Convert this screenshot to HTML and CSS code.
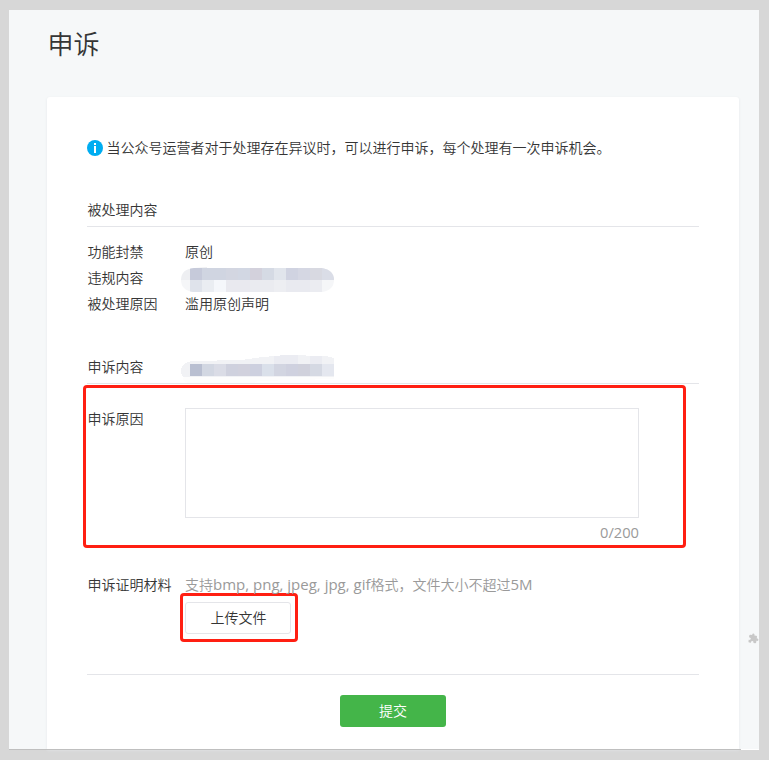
FILE: index.html
```html
<!DOCTYPE html>
<html lang="zh-CN">
<head>
<meta charset="utf-8">
<title>申诉</title>
<link rel="stylesheet" href="styles.css">
</head>
<body>
<main class="page">
  <h1 class="title">申诉</h1>
  <section class="card">
    <p class="notice">
      <svg class="info" viewBox="0 0 16 16" width="16" height="16"><circle cx="8" cy="8" r="8" fill="#00adf1"/><path d="M7 3h2v2H7zM7 6h2v7H7z" fill="#fff"/></svg>
      <span>当公众号运营者对于处理存在异议时，可以进行申诉，每个处理有一次申诉机会。</span>
    </p>

    <h2 class="heading">被处理内容</h2>
    <dl class="details">
      <dt>功能封禁</dt><dd>原创</dd>
      <dt>违规内容</dt>
      <dd>
        <svg class="mosaic" viewBox="0 0 153 26" width="153" height="26" shape-rendering="crispEdges">
          <clipPath id="pill"><path d="M13 1 L26 0 V1 H141 Q153 3 153 13 Q153 23 141 25 H12 Q0 23 0 13 Q0 2 13 1Z"/></clipPath>
          <g clip-path="url(#pill)">
            <path fill="#eeeff2" d="M0 0h153v13H0z"/><path fill="#f5f6f8" d="M0 13h153v13H0z"/>
            <path fill="#c6cada" d="M9 1h12v12H9z"/><path fill="#d0d5e1" d="M21 1h24v12H21z"/><path fill="#d3d6e1" d="M45 1h12v12H45z"/><path fill="#d2d7e3" d="M57 1h12v12H57z"/><path fill="#d3d1dc" d="M69 1h12v12H69z"/><path fill="#d5dae4" d="M81 1h12v12H81z"/><path fill="#e1e5ec" d="M93 1h12v12H93z"/><path fill="#d0d3e1" d="M105 1h12v12h-12z"/><path fill="#d5d7e3" d="M117 1h12v12h-12z"/><path fill="#d8d9e1" d="M129 1h12v12h-12z"/><path fill="#dadde7" d="M141 1h12v12h-12z"/>
            <path fill="#dfe3eb" d="M9 13h12v12H9z"/><path fill="#eaedf2" d="M21 13h12v12H21z"/><path fill="#f5f7fb" d="M33 13h12v12H33z"/><path fill="#e9e9ef" d="M45 13h24v12H45z"/><path fill="#eaebf0" d="M69 13h24v12H69z"/><path fill="#edeef2" d="M93 13h12v12H93z"/><path fill="#e9eaf0" d="M105 13h24v12h-24z"/><path fill="#ebecf1" d="M129 13h12v12h-12z"/>
          </g>
        </svg>
      </dd>
      <dt>被处理原因</dt><dd>滥用原创声明</dd>
    </dl>

    <h2 class="heading heading-appeal">
      <span class="label">申诉内容</span>
      <svg class="mosaic" viewBox="0 0 153 28" width="153" height="28" shape-rendering="crispEdges">
        <path fill="#fdfdfd" d="M0 16h153v8L78 26 72 28H8Q0 26 3 22Z"/>
        <path fill="#f1f2f5" d="M0 15Q1 7 12 6L60 5 82 2 105 0 145 1 153 3V22H3Q0 21 0 15Z"/>
        <path fill="#ebecf2" d="M93 1 105 0h12v9H93zM129 1h12v8h-12z"/>
        <path fill="#b9bfd1" d="M9 9h12v12H9z"/><path fill="#d2d7e2" d="M21 9h12v12H21z"/><path fill="#dadce6" d="M33 9h12v12H33z"/><path fill="#cfd1de" d="M45 9h12v12H45z"/><path fill="#d1d1dd" d="M57 9h12v12H57z"/><path fill="#cdd0df" d="M69 9h12v12H69z"/><path fill="#dae0ea" d="M81 9h12v12H81z"/><path fill="#d2d5e1" d="M93 9h12v12H93z"/><path fill="#cfd1df" d="M105 9h12v12h-12z"/><path fill="#d0d1dc" d="M117 9h12v12h-12z"/><path fill="#d5d9e3" d="M129 9h12v12h-12z"/><path fill="#e4e7ef" d="M141 9h12v12h-12z"/>
      </svg>
    </h2>

    <div class="reason">
      <label class="label" for="reason">申诉原因</label>
      <div class="editor">
        <textarea class="input" id="reason"></textarea>
        <span class="count">0/200</span>
      </div>
    </div>

    <div class="proof">
      <span class="label">申诉证明材料</span>
      <div class="upload">
        <p class="hint">支持<span class="latin">bmp, png, jpeg, jpg, gif</span>格式，文件大小不超过<span class="latin">5M</span></p>
        <div class="highlight"><button class="file">上传文件</button></div>
      </div>
    </div>

    <footer class="actions"><button class="submit">提交</button></footer>
  </section>
  <svg class="puzzle" viewBox="0 0 24 24" width="11" height="11"><path fill="#c8c8c8" d="M20.500 11H19V7a2 2 0 0 0-2-2h-4V3.500a2.500 2.500 0 0 0-5 0V5H4a2 2 0 0 0-2 2v3.800h1.500a2.700 2.700 0 0 1 0 5.400H2V20a2 2 0 0 0 2 2h3.800v-1.500a2.700 2.700 0 0 1 5.400 0V22H17a2 2 0 0 0 2-2v-4h1.500a2.500 2.500 0 0 0 0-5z" transform="rotate(8 12 12)"/></svg>
</main>
</body>
</html>
```

FILE: styles.css
```css
* { box-sizing: border-box; }
body {
  margin: 0;
  padding: 10px 10px 10px 9px;
  height: 760px;
  overflow: hidden;
  background: #d7d7d7;
  color: #353535;
  font: 350 14px/20px "Open Sans", "Noto Sans CJK SC", sans-serif;
}
h1, h2, p, dl, dd { margin: 0; font-weight: inherit; }
.page {
  position: relative;
  height: 740px;
  padding: 0 20px 0 38px;
  background: #f6f8f9;
}
.page::after {
  content: "";
  position: absolute;
  inset: auto 0 0 0;
  height: 1px;
  background: linear-gradient(to left, #fff 18px, #bfbfbf 18px);
}
.title {
  height: 87px;
  padding: 14px 0 0 0.5px;
  font-size: 26px;
  line-height: 40px;
}
.card {
  height: 652px;
  padding: 41px 40px 0;
  background: #fff;
  border-radius: 3px 3px 0 0;
  box-shadow: 0 1px 3px #e4e8eb;
}
.notice { display: flex; align-items: center; gap: 3.5px; height: 20px; }
.info { flex: none; }
.heading {
  height: 31px;
  margin-top: 38px;
  padding: 4px 0 0 0.5px;
  border-bottom: 1px solid #e4e5e9;
  font-size: 14px;
}
.details {
  display: grid;
  grid-template-columns: 97.5px 1fr;
  grid-auto-rows: 26px;
  padding: 12px 0 0 0.5px;
  line-height: 26px;
}
.details .mosaic { margin: 2px 0 0 -4px; }
.mosaic { display: block; }
.label { flex: none; width: 98px; padding-left: 0.5px; }
.heading-appeal { display: flex; margin-top: 35px; padding: 5px 0 0; height: 32px; }
.heading-appeal .mosaic { position: relative; left: -4px; top: -2px; }
.reason {
  display: flex;
  width: 603px;
  height: 163px;
  margin: 1px 0 0 -4px;
  padding: 20px 0 0 1px;
  border: 3px solid #ff1f12;
  border-radius: 4px;
}
.reason .label { padding-top: 1px; }
.editor { width: 454px; display: flex; flex-direction: column; }
.input {
  display: block;
  width: 454px;
  height: 110px;
  border: 1px solid #e4e5e9;
  background: #fff;
  resize: none;
}
.count { align-self: flex-end; padding-top: 4px; color: #9a9a9a; font-size: 14.7px; font-weight: 400; }
.proof { display: flex; height: 127px; padding-top: 27px; border-bottom: 1px solid #e4e5e9; }
.hint { height: 21px; margin-top: -1px; color: #9a9a9a; white-space: nowrap; }
.latin { font-size: 15px; font-weight: 400; }
.highlight {
  width: 118px;
  height: 49px;
  margin: -2px 0 0 -5px;
  padding: 6px 0 0 2px;
  border: 3px solid #ff1f12;
  border-radius: 4px;
}
button { font: inherit; padding: 0; display: block; }
.file {
  width: 106px;
  height: 32px;
  padding-left: 1px;
  background: #fff;
  border: 1px solid #e4e5e9;
  border-radius: 3px;
  color: #353535;
}
.actions { display: flex; justify-content: center; padding-top: 20px; }
.submit {
  width: 106px;
  height: 32px;
  border: 0;
  border-radius: 3px;
  background: #44b549;
  color: #fff;
}
.puzzle { position: absolute; right: 0; top: 623px; }
```
